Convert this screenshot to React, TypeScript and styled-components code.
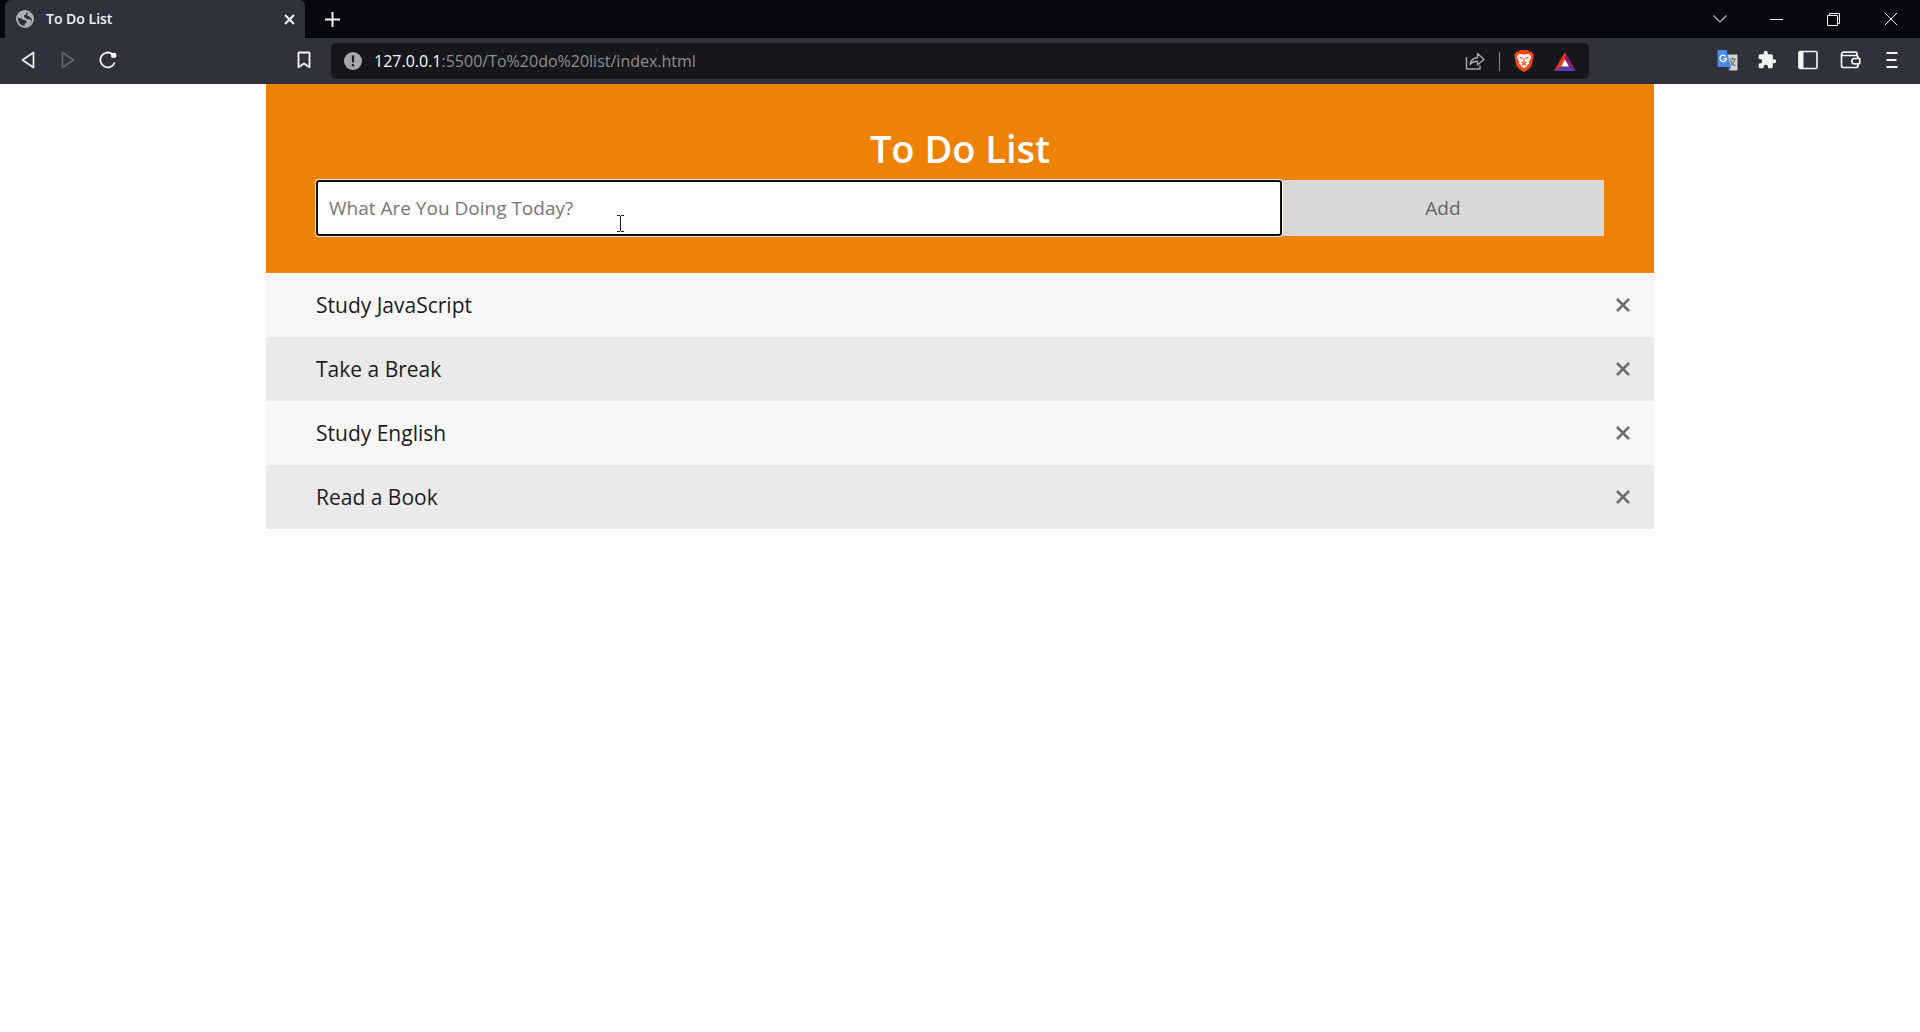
import React, { useState } from "react";
import styled, { createGlobalStyle } from "styled-components";

const GlobalStyle = createGlobalStyle`
  *, *::before, *::after { box-sizing: border-box; }
  body {
    margin: 0;
    background: #fdfdfc;
    color: #1c1c1c;
    font-family: "Segoe UI", "Open Sans", "Noto Sans", sans-serif;
  }
  button, input { font-family: inherit; }
  svg { display: block; }
`;

const Chrome = styled.header`
  color: #f4f4f6;
`;

const TabStrip = styled.div`
  display: flex;
  align-items: stretch;
  height: 38px;
  padding-left: 5px;
  background: #07060f;
`;

const Tab = styled.div`
  display: flex;
  align-items: center;
  gap: 12px;
  width: 300px;
  padding: 0 6px 0 11px;
  border-radius: 6px 6px 0 0;
  background: #2f313c;
`;

const TabTitle = styled.span`
  flex: 1;
  font-size: 14px;
  line-height: 20px;
  font-weight: 600;
`;

const IconButton = styled.button<{ $w?: number; $h?: number }>`
  display: flex;
  align-items: center;
  justify-content: center;
  flex: none;
  width: ${(p) => p.$w ?? 40}px;
  height: ${(p) => p.$h ?? 38}px;
  padding: 0;
  border: 0;
  background: none;
  color: inherit;
  cursor: pointer;

  &:disabled { color: #62616f; }
`;

const WindowControls = styled.div`
  display: flex;
  margin-left: auto;
`;

const Toolbar = styled.nav`
  display: flex;
  align-items: center;
  height: 46px;
  background: #2f313c;
`;

const ToolbarSide = styled.div<{ $end?: boolean }>`
  display: flex;
  align-items: center;
  justify-content: ${(p) => (p.$end ? "flex-end" : "flex-start")};
  flex: none;
  width: 331px;
  padding: ${(p) => (p.$end ? "0 7px 2px 0" : "0 7px 2px 8px")};
`;

const Spacer = styled.span`
  flex: 1;
`;

const AddressBar = styled.div`
  display: flex;
  align-items: center;
  flex: 1;
  min-width: 0;
  height: 36px;
  padding: 0 3px 0 13px;
  border-radius: 5px;
  background: #16171d;
`;

const Address = styled.button`
  flex: 1;
  min-width: 0;
  padding: 0 0 0 12px;
  border: 0;
  background: none;
  color: #8e8e8c;
  font-size: 16px;
  line-height: 24px;
  text-align: left;
  white-space: nowrap;
  overflow: hidden;
  cursor: text;
`;

const AddressInput = styled.input`
  flex: 1;
  min-width: 0;
  padding: 0 0 0 12px;
  border: 0;
  outline: 0;
  background: none;
  color: #f4f4f6;
  font-size: 16px;
  line-height: 24px;
`;

const Host = styled.span`
  color: #fafafa;
`;

const Divider = styled.span`
  width: 1px;
  height: 19px;
  margin: 0 4px;
  background: #8b8b8b;
`;

const Page = styled.main`
  max-width: 1388px;
  margin: 0 auto;
`;

const Hero = styled.section`
  padding: 40px 50px 37px;
  background: #ee8207;
`;

const Title = styled.h1`
  margin: 0;
  padding-bottom: 8px;
  color: #fff;
  font-size: 38px;
  line-height: 48px;
  font-weight: 600;
  text-align: center;
`;

const Form = styled.form`
  display: flex;
  position: relative;
`;

const TaskInput = styled.input`
  position: relative;
  z-index: 1;
  width: 75%;
  height: 56px;
  padding: 0 13px;
  border: 0;
  border-radius: 3px;
  outline: 2px solid #101010;
  outline-offset: -2px;
  box-shadow: 0 0 0 1px #fff3dc;
  background: #fdfdfd;
  color: #333;
  font-size: 19px;

  &::placeholder { color: #777; opacity: 1; }
`;

const AddButton = styled.button`
  width: 25%;
  height: 56px;
  padding: 0;
  border: 0;
  background: #d8d8d8;
  color: #666;
  font-size: 19px;
  cursor: pointer;
`;

const Pointer = styled.span`
  position: absolute;
  z-index: 2;
  left: 301px;
  top: 35px;
  pointer-events: none;
`;

const List = styled.ul`
  margin: 0;
  padding: 0;
  list-style: none;
`;

const Item = styled.li`
  display: flex;
  align-items: center;
  justify-content: space-between;
  height: 64px;
  padding: 0 7px 0 50px;
  background: #f7f7f7;
  font-size: 21px;
  line-height: 32px;

  &:nth-child(even) { background: #eaeaea; }
`;

const Remove = styled(IconButton)`
  color: #6c6c6c;
`;

const Globe = () => (
  <svg width="18" height="18" viewBox="0 0 18 18" aria-hidden="true">
    <circle cx="9" cy="9" r="8" fill="none" stroke="#adb0b4" strokeWidth="2" />
    <path d="M1 8.500C1 4 4.500 1 9 1l1.500 1.500-.3 1.800-2 .7-.2 2.300 2 .5.5 1.500H14l1.500 2-2.500 4.500L9.500 17l-1-.5.3-2.500 2-1.500-.8-2-3-.8-2-1.500-2.500-.5z" fill="#adb0b4" />
    <path d="M12.500 2l3.500 3 1 4-2-.5-1.500-2-2-.5-.3-1.500z" fill="#adb0b4" />
  </svg>
);

const Cross = ({ size, weight }: { size: number; weight: number }) => (
  <svg width={size} height={size} viewBox={`0 0 ${size} ${size}`} stroke="currentColor" strokeWidth={weight} aria-hidden="true">
    <path d={`M1 1L${size - 1} ${size - 1}M${size - 1} 1L1 ${size - 1}`} />
  </svg>
);

const Plus = () => (
  <svg width="15" height="15" viewBox="0 0 15 15" stroke="currentColor" strokeWidth="2" aria-hidden="true">
    <path d="M7.500 0v15M0 7.500h15" />
  </svg>
);

const Triangle = ({ flip }: { flip?: boolean }) => (
  <svg width="14" height="18" viewBox="0 0 14 18" fill="none" stroke="currentColor" strokeWidth="1.700" strokeLinejoin="round" aria-hidden="true">
    <path d={flip ? "M1.500 1.500v15l11-7.500z" : "M12.500 1.500v15L1.500 9z"} />
  </svg>
);

const Reload = () => (
  <svg width="18" height="18" viewBox="0 0 18 18" fill="none" stroke="currentColor" strokeWidth="1.800" aria-hidden="true">
    <path d="M15.700 11.500A7.400 7.400 0 1 1 13.500 3.200" />
    <path d="M12.500 3.200L16.500 1.800l1 3.700-2.500 1.700-3-1.500z" fill="currentColor" stroke="none" />
    <circle cx="14.800" cy="4.300" r="2.500" fill="currentColor" stroke="none" />
  </svg>
);

const Bookmark = () => (
  <svg width="14" height="18" viewBox="0 0 14 18" fill="none" stroke="currentColor" strokeWidth="1.800" strokeLinejoin="round" aria-hidden="true">
    <path d="M1.500 1.500h11v14.700L7 12.500l-5.500 3.700z" />
  </svg>
);

const Info = () => (
  <svg width="18" height="18" viewBox="0 0 18 18" aria-hidden="true">
    <circle cx="9" cy="9" r="9" fill="#a6a8aa" />
    <path d="M9 3.500v7" stroke="#202126" strokeWidth="2.200" />
    <circle cx="9" cy="13.300" r="1.300" fill="#202126" />
  </svg>
);

const Share = () => (
  <svg width="20" height="18" viewBox="0 0 20 18" fill="none" stroke="#a9a9a9" strokeWidth="1.400" strokeLinejoin="round" aria-hidden="true">
    <path d="M1.500 5v12h13.500v-3.500" />
    <path d="M5 12.500c.6-4.500 3.500-6.500 7.500-6.700V1.500L19 7.500l-6.500 5.500V9.300c-3.500 0-5.500.7-7.500 3.200z" />
  </svg>
);

const Lion = () => (
  <svg width="20" height="22" viewBox="0 0 20 22" aria-hidden="true">
    <path d="M6 0h8l2 2 2-.2 1.700 3.200-.6 1.800.3 1-1.900 8.200L15 19l-5 3-5-3-2.500-3L.6 7.800l.3-1L.3 5 2 1.800 4 2z" fill="#ee4a18" />
    <path d="M4.500 4.300L7.300 4l2.700.8 2.700-.8 2.800.3 1.800 3-2.600 4.500.5 2-1.800.9-1 2L10 18.200l-2.400-1.500-1-2-1.800-.9.500-2-2.600-4.500z" fill="#fdf6f2" />
    <path d="M5.500 7.400l3 .9M14.500 7.400l-3 .9M10 8.500v3.500M7.500 12l2.500 1.500 2.500-1.500M8 15.300l2-1 2 1" fill="none" stroke="#ee4a18" strokeWidth="1.200" />
  </svg>
);

const RewardTriangle = () => (
  <svg width="22" height="19" viewBox="0 0 22 19" aria-hidden="true">
    <path d="M11 0L0 19l7-4.500 4-7z" fill="#f0371d" />
    <path d="M11 0l11 19-7-4.500-4-7z" fill="#8a1f78" />
    <path d="M0 19h22l-7-4.500H7z" fill="#5a3fa8" />
    <path d="M11 7.500l4 7H7z" fill="#fff" />
  </svg>
);

const Translate = () => (
  <svg width="21" height="21" viewBox="0 0 21 21" aria-hidden="true">
    <path d="M9 4.500h10.500a1 1 0 0 1 1 1v14a1 1 0 0 1-1 1h-7.500z" fill="#d5d5d2" />
    <path d="M12.500 9h6.500M15.500 7.500V9M17.700 9c-.5 3-2.500 5.500-4.700 6.700M13.300 10.500c1 2.500 3 4.500 5 5.500" stroke="#65686c" strokeWidth="1.200" fill="none" />
    <path d="M1 0h8.500l4.500 17H1.500a1 1 0 0 1-1-1V1z" fill="#4f8ae8" />
    <path d="M10 17h4L12 20.500z" fill="#2f5fc4" />
    <path d="M8.700 6.400A3.200 3.200 0 1 0 9.300 8.700H6.500" stroke="#fff" strokeWidth="1.300" fill="none" />
  </svg>
);

const Puzzle = () => (
  <svg width="20" height="20" viewBox="0 0 24 24" aria-hidden="true">
    <path fill="#f3f3ee" d="M20.500 11H19V7a2 2 0 0 0-2-2h-4V3.500a2.500 2.500 0 0 0-5 0V5H4a2 2 0 0 0-2 2v3.800h1.500a2.700 2.700 0 0 1 0 5.400H2V20a2 2 0 0 0 2 2h3.800v-1.500a2.700 2.700 0 0 1 5.400 0V22H17a2 2 0 0 0 2-2v-4h1.500a2.500 2.500 0 0 0 0-5z" />
  </svg>
);

const SidePanel = () => (
  <svg width="20" height="20" viewBox="0 0 20 20" aria-hidden="true">
    <rect x="1" y="1.500" width="18" height="17" rx="1.500" fill="none" stroke="currentColor" strokeWidth="1.700" />
    <path d="M1 1.500h4.500v17H1z" fill="currentColor" />
  </svg>
);

const Wallet = () => (
  <svg width="21" height="18" viewBox="0 0 21 18" fill="none" stroke="currentColor" strokeWidth="1.700" strokeLinejoin="round" aria-hidden="true">
    <path d="M1.500 3.500v11a2 2 0 0 0 2 2h12.500a2 2 0 0 0 2-2V6.500a2 2 0 0 0-2-2H3.500a2 2 0 0 1-2-1.500 2 2 0 0 1 2-1.800H15.500a1.500 1.500 0 0 1 1.500 1.500v2" />
    <path d="M19.800 7.500h-5.300a2.500 2.500 0 0 0 0 5.300h4.300a1 1 0 0 0 1-1z" fill="#2f313c" />
  </svg>
);

const MenuLines = () => (
  <svg width="12" height="16" viewBox="0 0 12 16" stroke="currentColor" strokeWidth="1.800" aria-hidden="true">
    <path d="M.5 1h11M.5 8h10M.5 15h11" />
  </svg>
);

const Chevron = () => (
  <svg width="14" height="8" viewBox="0 0 14 8" fill="none" stroke="#b9b9bd" strokeWidth="1.200" aria-hidden="true">
    <path d="M.5 .5L7 7l6.500-6.500" />
  </svg>
);

const Minimize = () => (
  <svg width="13" height="1" viewBox="0 0 13 1" aria-hidden="true">
    <path d="M0 .5h13" stroke="currentColor" />
  </svg>
);

const Restore = () => (
  <svg width="13" height="13" viewBox="0 0 13 13" fill="none" stroke="currentColor" aria-hidden="true">
    <path d="M.5 2.500h10v10H.5zM2.500 2.500v-2h10v10h-2" />
  </svg>
);

const TextCursor = () => (
  <svg width="8" height="17" viewBox="0 0 8 17" fill="none" stroke="#1c1c1c" aria-hidden="true">
    <path d="M0 .5h3M4 .5h3M0 16.500h3M4 16.500h3M3.500 1v15" />
  </svg>
);

const HOST = "127.0.0.1";
const PATH = ":5500/To%20do%20list/index.html";

const BrowserChrome = () => {
  const [editing, setEditing] = useState(false);
  return (
    <Chrome>
      <TabStrip>
        <Tab>
          <Globe />
          <TabTitle>To Do List</TabTitle>
          <IconButton $w={20} aria-label="Close tab"><Cross size={11} weight={2} /></IconButton>
        </Tab>
        <IconButton $w={54} aria-label="New tab"><Plus /></IconButton>
        <WindowControls>
          <IconButton $w={56} aria-label="Search tabs"><Chevron /></IconButton>
          <IconButton $w={56} aria-label="Minimize"><Minimize /></IconButton>
          <IconButton $w={58} aria-label="Restore"><Restore /></IconButton>
          <IconButton $w={58} aria-label="Close window"><Cross size={14} weight={1} /></IconButton>
        </WindowControls>
      </TabStrip>
      <Toolbar aria-label="Browser">
        <ToolbarSide>
          <IconButton aria-label="Back"><Triangle /></IconButton>
          <IconButton aria-label="Forward" disabled><Triangle flip /></IconButton>
          <IconButton aria-label="Reload"><Reload /></IconButton>
          <Spacer />
          <IconButton aria-label="Bookmark"><Bookmark /></IconButton>
        </ToolbarSide>
        <AddressBar>
          <Info />
          {editing ? (
            <AddressInput aria-label="Address" defaultValue={HOST + PATH} autoFocus onBlur={() => setEditing(false)} />
          ) : (
            <Address onClick={() => setEditing(true)}>
              <Host>{HOST}</Host>{PATH}
            </Address>
          )}
          <IconButton aria-label="Share"><Share /></IconButton>
          <Divider />
          <IconButton aria-label="Shields"><Lion /></IconButton>
          <IconButton $w={42} aria-label="Rewards"><RewardTriangle /></IconButton>
        </AddressBar>
        <ToolbarSide $end>
          <IconButton aria-label="Translate"><Translate /></IconButton>
          <IconButton aria-label="Extensions"><Puzzle /></IconButton>
          <IconButton $w={42} aria-label="Side panel"><SidePanel /></IconButton>
          <IconButton $w={42} aria-label="Wallet"><Wallet /></IconButton>
          <IconButton $w={42} aria-label="Menu"><MenuLines /></IconButton>
        </ToolbarSide>
      </Toolbar>
    </Chrome>
  );
};

export default function App() {
  const [tasks, setTasks] = useState(["Study JavaScript", "Take a Break", "Study English", "Read a Book"]);
  const [draft, setDraft] = useState("");

  const add = (e: React.FormEvent) => {
    e.preventDefault();
    const text = draft.trim();
    if (!text) return;
    setTasks([...tasks, text]);
    setDraft("");
  };

  return (
    <>
      <GlobalStyle />
      <BrowserChrome />
      <Page>
        <Hero>
          <Title>To Do List</Title>
          <Form onSubmit={add}>
            <TaskInput
              aria-label="New task"
              placeholder="What Are You Doing Today?"
              value={draft}
              onChange={(e) => setDraft(e.target.value)}
            />
            <AddButton type="submit">Add</AddButton>
            <Pointer><TextCursor /></Pointer>
          </Form>
        </Hero>
        <List>
          {tasks.map((task, i) => (
            <Item key={task}>
              <span>{task}</span>
              <Remove $w={48} aria-label={`Remove ${task}`} onClick={() => setTasks(tasks.filter((_, j) => j !== i))}>
                <Cross size={14} weight={2.5} />
              </Remove>
            </Item>
          ))}
        </List>
      </Page>
    </>
  );
}
